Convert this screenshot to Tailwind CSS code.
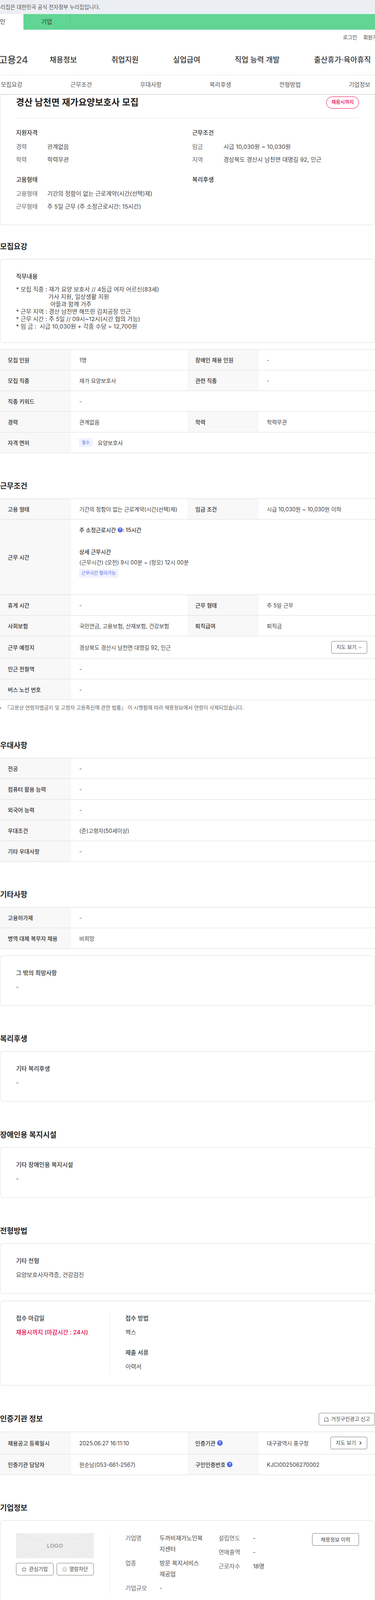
<!DOCTYPE html>
<html lang="ko">
<head>
<meta charset="utf-8">
<title>경산 남천면 재가요양보호사 모집</title>
<script src="https://cdn.jsdelivr.net/npm/@tailwindcss/browser@4"></script>
</head>
<body class="bg-white text-[#333] text-[14px] overflow-x-hidden [font-family:Inter,'Noto_Sans_CJK_KR',sans-serif]">
<div class="w-[960px] overflow-hidden">

<!-- top notice -->
<div class="h-9 bg-[#ebeff4] flex items-center overflow-hidden">
  <span class="-ml-[27px] whitespace-nowrap text-[13.5px] text-[#555]">이 누리집은 대한민국 공식 전자정부 누리집입니다.</span>
</div>
<div class="h-10 bg-[#61d594] flex items-center text-[15px] text-[#333]">
  <div class="w-[60px] h-full bg-white flex items-center overflow-hidden"><span class="-ml-[14px] whitespace-nowrap">개인</span></div>
  <div class="w-[120px] h-full flex items-center justify-center border-r border-[#57c586]">기업</div>
</div>

<!-- header -->
<div class="h-10 flex items-center text-[13px] text-[#444] whitespace-nowrap pl-[878px] gap-4 overflow-hidden">
  <span>로그인</span><span>회원가입</span>
</div>
<div class="h-[77px] flex items-center border-b border-[#e8e8e8] whitespace-nowrap overflow-hidden">
  <div class="w-[130px] -ml-[3px] shrink-0 text-[24px] font-semibold text-[#595959]">고용24</div>
  <nav class="flex gap-[88px] text-[19px] font-medium text-[#333]">
    <span>채용정보</span><span>취업지원</span><span>실업급여</span><span>직업 능력 개발</span><span>출산휴가·육아휴직</span>
  </nav>
</div>
<div class="relative z-10 h-12 flex items-center bg-white shadow-[0_1px_2px_rgba(0,0,0,0.25)] text-[15px] text-[#555] whitespace-nowrap">
  <span class="w-[178.2px] shrink-0 pl-[2px]">모집요강</span>
  <span class="w-[178.2px] shrink-0 pl-[2px]">근무조건</span>
  <span class="w-[178.2px] shrink-0 pl-[2px]">우대사항</span>
  <span class="w-[178.2px] shrink-0 pl-[2px]">복리후생</span>
  <span class="w-[178.2px] shrink-0 pl-[2px]">전형방법</span>
  <span class="w-[67px] shrink-0 pl-[2px]">기업정보</span>
</div>

<!-- summary card -->
<section class="border border-t-0 border-[#ddd] rounded-b-lg px-10 pt-[5px] pb-[30px] h-[335px]">
  <div class="flex items-center justify-between h-8 mb-[24px]">
    <h1 class="text-[23px] font-semibold text-[#222] whitespace-nowrap">경산 남천면 재가요양보호사 모집</h1>
    <span class="h-[31px] w-[84px] flex items-center justify-center rounded-full border border-[#e6004d] text-[12.5px] font-medium text-[#e6004d]">채용시까지</span>
  </div>
  <div class="border-t border-[#e8e8e8] pt-[25px] grid grid-cols-[451px_1fr] gap-y-[23px] text-[15px]">
    <div>
      <h3 class="h-6 leading-6 font-medium text-[#333]">지원자격</h3>
      <div class="mt-2">
        <div class="flex items-center h-[32.5px]"><span class="w-20 text-[#666]">경력</span><span class="text-[#444]">관계없음</span></div>
        <div class="flex items-center h-[32.5px]"><span class="w-20 text-[#666]">학력</span><span class="text-[#444]">학력무관</span></div>
      </div>
    </div>
    <div>
      <h3 class="h-6 leading-6 font-medium text-[#333]">근무조건</h3>
      <div class="mt-2">
        <div class="flex items-center h-[32.5px]"><span class="w-20 text-[#666]">임금</span><span class="text-[#444]">시급 10,030원 ~ 10,030원</span></div>
        <div class="flex items-center h-[32.5px]"><span class="w-20 text-[#666]">지역</span><span class="text-[#444]">경상북도 경산시 남천면 대명길 92, 인근</span></div>
      </div>
    </div>
    <div>
      <h3 class="h-6 leading-6 font-medium text-[#333]">고용형태</h3>
      <div class="mt-2">
        <div class="flex items-center h-[32.5px]"><span class="w-20 text-[#666]">고용형태</span><span class="text-[#444]">기간의 정함이 없는 근로계약(시간(선택)제)</span></div>
        <div class="flex items-center h-[32.5px]"><span class="w-20 text-[#666]">근무형태</span><span class="text-[#444]">주 5일 근무 (주 소정근로시간: 15시간)</span></div>
      </div>
    </div>
    <div>
      <h3 class="h-6 leading-6 font-medium text-[#333]">복리후생</h3>
    </div>
  </div>
</section>

<!-- 모집요강 -->
<h2 class="mt-[42px] mb-[17px] h-7 leading-7 text-[19px] font-semibold text-[#222]">모집요강</h2>
<section class="border border-[#ddd] rounded-lg px-10 pt-8 pb-8 text-[15px]">
  <h3 class="h-6 leading-6 font-medium text-[#333]">직무내용</h3>
  <div class="mt-[11px] leading-[19px] text-[#444]">
    <div>* 모집 직종 : 재가 요양 보호사 // 4등급 여자 어르신(83세)</div>
    <div class="pl-[83px]">가사 지원, 일상생활 지원</div>
    <div class="pl-[88px]">아들과 함께 거주</div>
    <div>* 근무 지역 : 경산 남천면 해뜨란 김치공장 인근</div>
    <div>* 근무 시간 : 주 5일 // 09시~12시(시간 협의 가능)</div>
    <div>* 임 금 :&nbsp; 시급 10,030원 + 각종 수당 = 12,700원</div>
  </div>
</section>

<div class="mt-4 border-t border-[#ddd]">
  <div class="flex h-[53px] border-b border-[#ddd]">
    <div class="w-[182px] bg-[#f8f8f8] pl-5 flex items-center font-medium">모집 인원</div>
    <div class="w-[298px] pl-[21px] flex items-center text-[#444]">1명</div>
    <div class="w-[182px] bg-[#f8f8f8] pl-5 flex items-center font-medium">장애인 채용 인원</div>
    <div class="flex-1 pl-[21px] flex items-center text-[#444]">-</div>
  </div>
  <div class="flex h-[53px] border-b border-[#ddd]">
    <div class="w-[182px] bg-[#f8f8f8] pl-5 flex items-center font-medium">모집 직종</div>
    <div class="w-[298px] pl-[21px] flex items-center text-[#444]">재가 요양보호사</div>
    <div class="w-[182px] bg-[#f8f8f8] pl-5 flex items-center font-medium">관련 직종</div>
    <div class="flex-1 pl-[21px] flex items-center text-[#444]">-</div>
  </div>
  <div class="flex h-[53px] border-b border-[#ddd]">
    <div class="w-[182px] bg-[#f8f8f8] pl-5 flex items-center font-medium">직종 키워드</div>
    <div class="flex-1 pl-[21px] flex items-center text-[#444]">-</div>
  </div>
  <div class="flex h-[53px] border-b border-[#ddd]">
    <div class="w-[182px] bg-[#f8f8f8] pl-5 flex items-center font-medium">경력</div>
    <div class="w-[298px] pl-[21px] flex items-center text-[#444]">관계없음</div>
    <div class="w-[182px] bg-[#f8f8f8] pl-5 flex items-center font-medium">학력</div>
    <div class="flex-1 pl-[21px] flex items-center text-[#444]">학력무관</div>
  </div>
  <div class="flex h-[53px] border-b border-[#ddd]">
    <div class="w-[182px] bg-[#f8f8f8] pl-5 flex items-center font-medium">자격 면허</div>
    <div class="flex-1 pl-5 flex items-center text-[#444]">
      <span class="w-[35px] h-[22px] rounded bg-[#eef1fe] text-[#5a72ee] text-[11px] flex items-center justify-center mr-[13px]">필수</span>요양보호사
    </div>
  </div>
</div>

<!-- 근무조건 -->
<h2 class="mt-[71px] mb-[17px] h-7 leading-7 text-[19px] font-semibold text-[#222]">근무조건</h2>
<div class="border-t border-[#ddd]">
  <div class="flex h-[53px] border-b border-[#ddd]">
    <div class="w-[182px] bg-[#f8f8f8] pl-5 flex items-center font-medium">고용 형태</div>
    <div class="w-[298px] pl-[21px] flex items-center text-[#444] whitespace-nowrap">기간의 정함이 없는 근로계약(시간(선택)제)</div>
    <div class="w-[182px] bg-[#f8f8f8] pl-5 flex items-center font-medium">임금 조건</div>
    <div class="flex-1 pl-[21px] flex items-center text-[#444]">시급 10,030원 ~ 10,030원 이하</div>
  </div>
  <div class="flex h-[193px] border-b border-[#ddd]">
    <div class="w-[182px] bg-[#f8f8f8] pl-5 flex items-center font-medium">근무 시간</div>
    <div class="flex-1 pl-[21px] pt-[15px]">
      <div class="h-[22px] flex items-center font-medium whitespace-pre">주 소정근로시간 <span class="w-[13px] h-[13px] rounded-full bg-[#4a6ae5] text-white text-[9px] font-bold flex items-center justify-center">?</span>: 15시간</div>
      <div class="mt-[34px] h-[22px] flex items-center font-medium">상세 근무시간</div>
      <div class="mt-[5px] h-[22px] flex items-center text-[#444]">(근무시간) (오전) 9시 00분 ~ (정오) 12시 00분</div>
      <div class="mt-[7px] -ml-px w-[101px] h-[22px] rounded bg-[#eef1fe] text-[#5a72ee] text-[11.5px] flex items-center justify-center whitespace-nowrap">근무시간 협의가능</div>
    </div>
  </div>
  <div class="flex h-[53px] border-b border-[#ddd]">
    <div class="w-[182px] bg-[#f8f8f8] pl-5 flex items-center font-medium">휴게 시간</div>
    <div class="w-[298px] pl-[21px] flex items-center text-[#444]">-</div>
    <div class="w-[182px] bg-[#f8f8f8] pl-5 flex items-center font-medium">근무 형태</div>
    <div class="flex-1 pl-[21px] flex items-center text-[#444]">주 5일 근무</div>
  </div>
  <div class="flex h-[53px] border-b border-[#ddd]">
    <div class="w-[182px] bg-[#f8f8f8] pl-5 flex items-center font-medium">사회보험</div>
    <div class="w-[298px] pl-[21px] flex items-center text-[#444] whitespace-nowrap">국민연금, 고용보험, 산재보험, 건강보험</div>
    <div class="w-[182px] bg-[#f8f8f8] pl-5 flex items-center font-medium">퇴직급여</div>
    <div class="flex-1 pl-[21px] flex items-center text-[#444]">퇴직금</div>
  </div>
  <div class="flex h-[57px] border-b border-[#ddd]">
    <div class="w-[182px] bg-[#f8f8f8] pl-5 flex items-center font-medium">근무 예정지</div>
    <div class="flex-1 pl-[21px] pr-5 flex items-center justify-between text-[#444]">
      <span>경상북도 경산시 남천면 대명길 92, 인근</span>
      <button class="w-[92px] h-8 border border-[#777] rounded flex items-center justify-center gap-1 text-[13px] text-[#444]">지도 보기
        <svg class="w-[10px] h-[10px]" viewBox="0 0 10 10" fill="none" stroke="#444" stroke-width="1"><path d="M1.5 3.5 5 7l3.5-3.5"/></svg>
      </button>
    </div>
  </div>
  <div class="flex h-[53px] border-b border-[#ddd]">
    <div class="w-[182px] bg-[#f8f8f8] pl-5 flex items-center font-medium">인근 전철역</div>
    <div class="flex-1 pl-[21px] flex items-center text-[#444]">-</div>
  </div>
  <div class="flex h-[53px] border-b border-[#ddd]">
    <div class="w-[182px] bg-[#f8f8f8] pl-5 flex items-center font-medium">버스 노선 번호</div>
    <div class="flex-1 pl-[21px] flex items-center text-[#444]">-</div>
  </div>
</div>
<div class="mt-[10px] h-5 flex items-center text-[13px] text-[#666] whitespace-nowrap">
  <span class="w-[3px] h-[3px] rounded-full bg-[#666] mr-[9px]"></span>『고용상 연령차별금지 및 고령자 고용촉진에 관한 법률』 이 시행됨에 따라 채용정보에서 연령이 삭제되었습니다.
</div>

<!-- 우대사항 -->
<h2 class="mt-[73px] mb-[17px] h-7 leading-7 text-[19px] font-semibold text-[#222]">우대사항</h2>
<div class="border-t border-[#ddd]">
  <div class="flex h-[53px] border-b border-[#ddd]">
    <div class="w-[182px] bg-[#f8f8f8] pl-5 flex items-center font-medium">전공</div>
    <div class="flex-1 pl-[21px] flex items-center text-[#444]">-</div>
  </div>
  <div class="flex h-[53px] border-b border-[#ddd]">
    <div class="w-[182px] bg-[#f8f8f8] pl-5 flex items-center font-medium">컴퓨터 활용 능력</div>
    <div class="flex-1 pl-[21px] flex items-center text-[#444]">-</div>
  </div>
  <div class="flex h-[53px] border-b border-[#ddd]">
    <div class="w-[182px] bg-[#f8f8f8] pl-5 flex items-center font-medium">외국어 능력</div>
    <div class="flex-1 pl-[21px] flex items-center text-[#444]">-</div>
  </div>
  <div class="flex h-[53px] border-b border-[#ddd]">
    <div class="w-[182px] bg-[#f8f8f8] pl-5 flex items-center font-medium">우대조건</div>
    <div class="flex-1 pl-[21px] flex items-center text-[#444]">(준)고령자(50세이상)</div>
  </div>
  <div class="flex h-[53px] border-b border-[#ddd]">
    <div class="w-[182px] bg-[#f8f8f8] pl-5 flex items-center font-medium">기타 우대사항</div>
    <div class="flex-1 pl-[21px] flex items-center text-[#444]">-</div>
  </div>
</div>

<!-- 기타사항 -->
<h2 class="mt-[71px] mb-[17px] h-7 leading-7 text-[19px] font-semibold text-[#222]">기타사항</h2>
<div class="border-t border-[#ddd]">
  <div class="flex h-[53px] border-b border-[#ddd]">
    <div class="w-[182px] bg-[#f8f8f8] pl-5 flex items-center font-medium">고용허가제</div>
    <div class="flex-1 pl-[21px] flex items-center text-[#444]">-</div>
  </div>
  <div class="flex h-[53px] border-b border-[#ddd]">
    <div class="w-[182px] bg-[#f8f8f8] pl-5 flex items-center font-medium">병역 대체 복무자 채용</div>
    <div class="flex-1 pl-[21px] flex items-center text-[#444]">비희망</div>
  </div>
</div>
<section class="mt-[17px] border border-[#ddd] rounded-lg px-10 pt-8 pb-[35px] text-[15px]">
  <h3 class="h-6 leading-6 font-medium text-[#333]">그 밖의 희망사항</h3>
  <div class="mt-3 h-6 leading-6 text-[#444]">-</div>
</section>

<!-- 복리후생 -->
<h2 class="mt-[71px] mb-[17px] h-7 leading-7 text-[19px] font-semibold text-[#222]">복리후생</h2>
<section class="border border-[#ddd] rounded-lg px-10 pt-8 pb-[35px] text-[15px]">
  <h3 class="h-6 leading-6 font-medium text-[#333]">기타 복리후생</h3>
  <div class="mt-3 h-6 leading-6 text-[#444]">-</div>
</section>

<!-- 장애인용 복지시설 -->
<h2 class="mt-[72px] mb-[17px] h-7 leading-7 text-[19px] font-semibold text-[#222]">장애인용 복지시설</h2>
<section class="border border-[#ddd] rounded-lg px-10 pt-8 pb-[35px] text-[15px]">
  <h3 class="h-6 leading-6 font-medium text-[#333]">기타 장애인용 복지시설</h3>
  <div class="mt-3 h-6 leading-6 text-[#444]">-</div>
</section>

<!-- 전형방법 -->
<h2 class="mt-[72px] mb-[17px] h-7 leading-7 text-[19px] font-semibold text-[#222]">전형방법</h2>
<section class="border border-[#ddd] rounded-lg px-10 pt-8 pb-[35px] text-[15px]">
  <h3 class="h-6 leading-6 font-medium text-[#333]">기타 전형</h3>
  <div class="mt-3 h-6 leading-6 text-[#444]">요양보호사자격증, 건강검진</div>
</section>
<section class="mt-[18px] border border-[#ddd] rounded-lg px-10 pt-[31px] pb-8 text-[15px] flex">
  <div class="w-[240px] h-[152px] pt-px border-r border-[#e8e8e8]">
    <h3 class="h-6 leading-6 font-medium text-[#333]">접수 마감일</h3>
    <div class="mt-3 h-6 leading-6 font-medium text-[#e6004d]">채용시까지 (마감시간 : 24시)</div>
  </div>
  <div class="pl-10 pt-px">
    <h3 class="h-6 leading-6 font-medium text-[#333]">접수 방법</h3>
    <div class="mt-3 h-6 leading-6 text-[#444]">팩스</div>
    <h3 class="mt-7 h-6 leading-6 font-medium text-[#333]">제출 서류</h3>
    <div class="mt-3 h-6 leading-6 text-[#444]">이력서</div>
  </div>
</section>

<!-- 인증기관 정보 -->
<div class="mt-[70px] mb-4 h-8 flex items-center justify-between">
  <h2 class="text-[19px] font-semibold text-[#222]">인증기관 정보</h2>
  <button class="w-[144px] h-8 border border-[#777] rounded flex items-center justify-center gap-[6px] text-[13px] text-[#444] whitespace-nowrap">
    <svg class="w-[13px] h-[13px]" viewBox="0 0 13 13" fill="none" stroke="#444" stroke-width="1"><path d="M2 11.5V6a4.5 4.5 0 0 1 9 0v5.5zM.5 11.5h12M8 3.2A3 3 0 0 1 9.4 5.6"/></svg>거짓구인광고 신고
  </button>
</div>
<div class="border-t border-[#ddd]">
  <div class="flex h-[57px] border-b border-[#ddd]">
    <div class="w-[182px] bg-[#f8f8f8] pl-5 flex items-center font-medium">채용공고 등록일시</div>
    <div class="w-[298px] pl-[21px] flex items-center text-[#444]">2025.06.27 16:11:10</div>
    <div class="w-[182px] bg-[#f8f8f8] pl-5 flex items-center gap-1 font-medium">인증기관 <span class="w-[14px] h-[14px] rounded-full bg-[#4a6ae5] text-white text-[9px] font-bold flex items-center justify-center">?</span></div>
    <div class="flex-1 pl-[21px] pr-5 flex items-center justify-between text-[#444]">
      <span>대구광역시 중구청</span>
      <button class="w-[94px] h-8 border border-[#777] rounded flex items-center justify-center gap-2 text-[13px] text-[#444] whitespace-nowrap">지도 보기
        <svg class="w-[7px] h-[10px]" viewBox="0 0 7 10" fill="none" stroke="#333" stroke-width="1.6"><path d="M1.5 1 5.5 5l-4 4"/></svg>
      </button>
    </div>
  </div>
  <div class="flex h-[53px] border-b border-[#ddd]">
    <div class="w-[182px] bg-[#f8f8f8] pl-5 flex items-center font-medium">인증기관 담당자</div>
    <div class="w-[298px] pl-[21px] flex items-center text-[#444]">원순남(053-661-2567)</div>
    <div class="w-[182px] bg-[#f8f8f8] pl-5 flex items-center gap-1 font-medium">구인인증번호 <span class="w-[14px] h-[14px] rounded-full bg-[#4a6ae5] text-white text-[9px] font-bold flex items-center justify-center">?</span></div>
    <div class="flex-1 pl-[21px] flex items-center text-[#444]">KJCI002506270002</div>
  </div>
</div>

<!-- 기업정보 -->
<h2 class="mt-[71px] mb-[17px] h-7 leading-7 text-[19px] font-semibold text-[#222]">기업정보</h2>
<section class="border border-[#ddd] rounded-lg px-10 pt-8 pb-8 flex text-[15px]">
  <div class="w-[240px] h-[156px] shrink-0 border-r border-[#e8e8e8]">
    <div class="relative w-[199px] h-16 bg-[#eeeeee] flex items-center justify-center">
      <svg class="absolute inset-0 w-[199px] h-16" viewBox="0 0 199 64" fill="none" stroke="#e0e0e0" stroke-width="1"><path d="M0 0 72 22M127 22 199 0M0 64 72 41M127 41 199 64"/></svg>
      <span class="relative text-[14px] font-bold text-[#a5a5a5] [font-family:'Liberation_Sans',sans-serif]">LOGO</span>
    </div>
    <div class="mt-3 w-[199px] flex gap-2">
      <button class="flex-1 h-8 border border-[#777] rounded flex items-center justify-center gap-[6px] text-[13px] text-[#444] whitespace-nowrap">
        <svg class="w-[13px] h-[13px]" viewBox="0 0 14 14" fill="none" stroke="#444" stroke-width="1"><path d="M7 1l1.8 3.9 4.2.5-3.1 2.9.8 4.2L7 10.4l-3.7 2.1.8-4.2L1 5.4l4.2-.5z"/></svg>관심기업
      </button>
      <button class="flex-1 h-8 border border-[#777] rounded flex items-center justify-center gap-[5px] text-[13px] text-[#444] whitespace-nowrap">
        <svg class="w-[13px] h-[13px]" viewBox="0 0 13 13" fill="none"><circle cx="6.5" cy="6.5" r="6.5" fill="#d9d9d9"/><path d="M4 4l5 5M9 4l-5 5" stroke="#fff" stroke-width="1.2"/></svg>열람차단
      </button>
    </div>
  </div>
  <div class="pl-10 flex flex-1 min-w-0 text-[#444] leading-7">
    <div class="w-[238.5px] shrink-0 flex flex-col gap-2 -mt-px">
      <div class="flex"><span class="w-[87.5px] shrink-0 text-[#666]">기업명</span><span class="w-[122px] break-all">두꺼비재가노인복지센터</span></div>
      <div class="flex"><span class="w-[87.5px] shrink-0 text-[#666]">업종</span><span class="w-[122px] break-keep">방문 복지서비스 제공업</span></div>
      <div class="flex"><span class="w-[87.5px] shrink-0 text-[#666]">기업규모</span><span>-</span></div>
    </div>
    <div class="flex flex-col gap-2 -mt-px">
      <div class="flex"><span class="w-[88px] text-[#666]">설립연도</span><span>-</span></div>
      <div class="flex"><span class="w-[88px] text-[#666]">연매출액</span><span>-</span></div>
      <div class="flex"><span class="w-[88px] text-[#666]">근로자수</span><span>18명</span></div>
    </div>
    <button class="ml-auto w-[120px] h-8 border border-[#777] rounded flex items-center justify-center text-[13px] text-[#444] whitespace-nowrap">채용정보 이력</button>
  </div>
</section>

</div>
</body>
</html>
